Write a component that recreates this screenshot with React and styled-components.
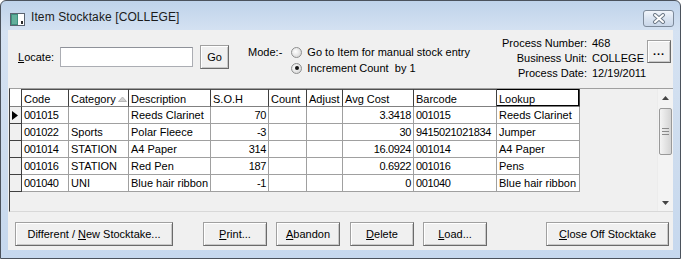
import React from "react";
import styled, { createGlobalStyle } from "styled-components";

const GlobalStyle = createGlobalStyle`
  body {
    margin: 0;
    background: #ffffff;
    font-family: "Liberation Sans", Arial, sans-serif;
    font-size: 11px;
    color: #000;
  }
`;

const columns = [
  { key: "code", title: "Code", width: 47, num: true },
  { key: "category", title: "Category", width: 60, sorted: true },
  { key: "description", title: "Description", width: 82 },
  { key: "soh", title: "S.O.H", width: 58, right: true, num: true },
  { key: "count", title: "Count", width: 38 },
  { key: "adjust", title: "Adjust", width: 36 },
  { key: "cost", title: "Avg Cost", width: 71, right: true, num: true },
  { key: "barcode", title: "Barcode", width: 83, num: true },
  { key: "lookup", title: "Lookup", width: 83, focus: true },
];

const rows = [
  { code: "001015", category: "", description: "Reeds Clarinet", soh: "70", cost: "3.3418", barcode: "001015", lookup: "Reeds Clarinet" },
  { code: "001022", category: "Sports", description: "Polar Fleece", soh: "-3", cost: "30", barcode: "9415021021834", lookup: "Jumper" },
  { code: "001014", category: "STATION", description: "A4 Paper", soh: "314", cost: "16.0924", barcode: "001014", lookup: "A4 Paper" },
  { code: "001016", category: "STATION", description: "Red Pen", soh: "187", cost: "0.6922", barcode: "001016", lookup: "Pens" },
  { code: "001040", category: "UNI", description: "Blue hair ribbon", soh: "-1", cost: "0", barcode: "001040", lookup: "Blue hair ribbon" },
];

const Window = styled.div`
  width: 681px;
  height: 259px;
  box-sizing: border-box;
  border: 1px solid #4b525c;
  border-radius: 6px 6px 0 0;
  background: linear-gradient(#bfd3ea, #d5e2f2 12%, #cddcee 60%, #c6d8ee);
  padding: 0 7px 8px 7px;
  display: flex;
  flex-direction: column;
`;

const TitleBar = styled.div`
  height: 29px;
  display: flex;
  align-items: flex-start;
`;

const TitleIcon = styled.svg`
  margin: 12px 0 0 2px;
  width: 15px;
  height: 13px;
`;

const TitleText = styled.span`
  margin: 9px 0 0 6px;
  font-size: 12px;
  color: #1b1b1b;
  letter-spacing: 0.1px;
`;

const CloseButton = styled.div`
  margin: 9px -1px 0 auto;
  width: 29px;
  height: 15px;
  border: 1px solid #7d8a9a;
  border-radius: 3px;
  background: linear-gradient(#f1f5fb, #dae4f1 50%, #c9d7e9);
  display: flex;
  align-items: center;
  justify-content: center;
`;

const Client = styled.div`
  height: 220px;
  background: #f0f0f0;
  display: flex;
  flex-direction: column;
`;

const TopPanel = styled.div`
  height: 58px;
  display: flex;
  align-items: flex-start;
`;

const LocateGroup = styled.div`
  display: flex;
  align-items: center;
  margin: 15px 0 0 10px;
`;

const Label = styled.label`
  margin-right: 6px;
`;

const TextBox = styled.div`
  width: 133px;
  height: 20px;
  box-sizing: border-box;
  border: 1px solid #abadb3;
  border-top-color: #8e9199;
  background: #fff;
`;

const Button = styled.div`
  box-sizing: border-box;
  width: ${(p) => p.$w}px;
  height: ${(p) => p.$h || 24}px;
  margin-left: ${(p) => (p.$ml === "auto" ? "auto" : `${p.$ml || 0}px`)};
  border: 1px solid #a0a0a0;
  border-right-color: #6a6a6a;
  border-bottom-color: #6a6a6a;
  box-shadow: inset 1px 1px #ffffff, inset -1px -1px #c8c8c8;
  background: #f0f0f0;
  display: flex;
  align-items: center;
  justify-content: center;
  padding-bottom: 1px;
`;

const ModeGroup = styled.div`
  display: flex;
  margin: 14px 0 0 19px;
  line-height: 16px;
`;

const ModeOptions = styled.div`
  display: flex;
  flex-direction: column;
  margin-left: 9px;
`;

const RadioRow = styled.div`
  display: flex;
  align-items: center;
  height: 16px;
`;

const RadioDot = styled.span`
  width: 11px;
  height: 11px;
  box-sizing: border-box;
  border-radius: 50%;
  border: 1px solid #8e8f8f;
  background: radial-gradient(circle at 40% 40%, #ffffff, #dcdcdc 70%);
  margin-right: 5px;
  display: flex;
  align-items: center;
  justify-content: center;
  &::after {
    content: "";
    width: 4px;
    height: 4px;
    border-radius: 50%;
    background: ${(p) => (p.$on ? "#141414" : "transparent")};
  }
`;

const InfoGrid = styled.div`
  margin: 6px 2px 0 auto;
  display: grid;
  grid-template-columns: auto 55px 24px;
  grid-auto-rows: 15px;
  line-height: 15px;
`;

const InfoLabel = styled.span`
  text-align: right;
  padding-right: 5px;
`;

const InfoValue = styled.span`
  grid-column: ${(p) => (p.$wide ? "2 / 4" : "2")};
  white-space: nowrap;
`;

const MoreButton = styled(Button)`
  grid-column: 3;
  grid-row: 1 / 3;
  margin-top: 4px;
  font-weight: bold;
  letter-spacing: 1px;
`;

const DataGrid = styled.div`
  margin-left: 1px;
  height: 124px;
  box-sizing: border-box;
  border-left: 1px solid #404040;
  border-top: 1px solid #a0a0a0;
  border-bottom: 1px solid #d8d8d8;
  display: flex;
  background: #f0f0f0;
`;

const RowsArea = styled.div`
  flex: 1;
`;

const Row = styled.div`
  display: flex;
  height: ${(p) => (p.$head ? 18 : 17)}px;
`;

const IndicatorCell = styled.div`
  width: 12px;
  box-sizing: border-box;
  border-right: 1px solid #404040;
  border-bottom: 1px solid ${(p) => (p.$head ? "#808080" : "#404040")};
  background: ${(p) => (p.$head ? "#ffffff" : "#f0f0f0")};
  display: flex;
  align-items: center;
  padding-left: 2px;
`;

const HeadCell = styled.div`
  width: ${(p) => p.$w}px;
  box-sizing: border-box;
  border-right: 1px solid #404040;
  border-bottom: 1px solid #808080;
  box-shadow: ${(p) =>
    p.$focus ? "inset 0 1px #000, inset -1px 0 #000, inset 0 -1px #000" : "inset 0 1px #505050"};
  background: #ffffff;
  padding: 2px 0 0 2px;
  display: flex;
  align-items: center;
  white-space: nowrap;
  overflow: hidden;
`;

const Cell = styled.div`
  width: ${(p) => p.$w}px;
  box-sizing: border-box;
  border-right: 1px solid #a0a0a0;
  border-bottom: 1px solid #a0a0a0;
  background: #ffffff;
  padding: 1px 2px 0 2px;
  line-height: 15px;
  letter-spacing: ${(p) => (p.$num ? "-0.35px" : "0")};
  text-align: ${(p) => (p.$right ? "right" : "left")};
  white-space: nowrap;
  overflow: hidden;
`;

const Scrollbar = styled.div`
  width: 15px;
  background: #f3f3f3;
  border-left: 1px solid #ececec;
  display: flex;
  flex-direction: column;
  align-items: center;
`;

const ScrollArrow = styled.div`
  height: 17px;
  width: 100%;
  display: flex;
  align-items: center;
  justify-content: center;
`;

const Thumb = styled.div`
  width: 13px;
  height: 47px;
  box-sizing: border-box;
  margin-top: 2px;
  border: 1px solid #999999;
  border-radius: 2px;
  background: linear-gradient(90deg, #f4f4f4, #e4e4e4 50%, #d4d4d4);
  display: flex;
  align-items: center;
  justify-content: center;
`;

const ScrollSpace = styled.div`
  flex: 1;
`;

const ButtonBar = styled.div`
  display: flex;
  margin: 10px 4px 0 7px;
`;

const SortArrow = () => (
  <svg width="9" height="6" viewBox="0 0 9 6" style={{ marginLeft: 2 }}>
    <path d="M0.5 5.5 L4.5 1 L8.5 5.5 Z" fill="#d2d2d2" stroke="#b4b4b4" strokeWidth="1" />
  </svg>
);

export default function App() {
  return (
    <>
      <GlobalStyle />
      <Window>
        <TitleBar>
          <TitleIcon viewBox="0 0 15 13">
            <rect x="0.5" y="0.5" width="14" height="12" fill="#ffffff" stroke="#5b6470" />
            <rect x="1" y="1" width="7" height="11" fill="#3e8f7e" />
            <rect x="2" y="2" width="5" height="9" fill="#63b09c" />
            <rect x="11" y="8" width="2" height="3" fill="#2b2b2b" />
          </TitleIcon>
          <TitleText>Item Stocktake [COLLEGE]</TitleText>
          <CloseButton>
            <svg width="14" height="11" viewBox="0 0 14 11">
              <path d="M3 2 L11 9 M11 2 L3 9" stroke="#6e7a88" strokeWidth="4" strokeLinecap="round" />
              <path d="M3 2 L11 9 M11 2 L3 9" stroke="#ffffff" strokeWidth="2" strokeLinecap="round" />
            </svg>
          </CloseButton>
        </TitleBar>

        <Client>
          <TopPanel>
            <LocateGroup>
              <Label>
                <u>L</u>ocate:
              </Label>
              <TextBox />
              <Button $w={29} $ml={7}>Go</Button>
            </LocateGroup>

            <ModeGroup>
              <span>Mode:-</span>
              <ModeOptions>
                <RadioRow>
                  <RadioDot />
                  Go to Item for manual stock entry
                </RadioRow>
                <RadioRow>
                  <RadioDot $on />
                  Increment Count&nbsp; by 1
                </RadioRow>
              </ModeOptions>
            </ModeGroup>

            <InfoGrid>
              <InfoLabel>Process Number:</InfoLabel>
              <InfoValue>468</InfoValue>
              <MoreButton $w={24} $h={23}>...</MoreButton>
              <InfoLabel>Business Unit:</InfoLabel>
              <InfoValue>COLLEGE</InfoValue>
              <InfoLabel>Process Date:</InfoLabel>
              <InfoValue $wide>12/19/2011</InfoValue>
            </InfoGrid>
          </TopPanel>

          <DataGrid>
            <RowsArea>
              <Row $head>
                <IndicatorCell $head />
                {columns.map((c) => (
                  <HeadCell key={c.key} $w={c.width} $focus={c.focus}>
                    {c.title}
                    {c.sorted && <SortArrow />}
                  </HeadCell>
                ))}
              </Row>
              {rows.map((r, i) => (
                <Row key={r.code}>
                  <IndicatorCell>
                    {i === 0 && (
                      <svg width="6" height="9" viewBox="0 0 6 9">
                        <path d="M0 0 L6 4.5 L0 9 Z" fill="#000" />
                      </svg>
                    )}
                  </IndicatorCell>
                  {columns.map((c) => (
                    <Cell key={c.key} $w={c.width} $right={c.right} $num={c.num}>
                      {r[c.key] || ""}
                    </Cell>
                  ))}
                </Row>
              ))}
            </RowsArea>
            <Scrollbar>
              <ScrollArrow>
                <svg width="7" height="4" viewBox="0 0 7 4">
                  <path d="M0 4 L3.5 0 L7 4 Z" fill="#444" />
                </svg>
              </ScrollArrow>
              <Thumb>
                <svg width="7" height="7" viewBox="0 0 7 7">
                  <path d="M0 0.5 H7 M0 3.5 H7 M0 6.5 H7" stroke="#8a8a8a" strokeWidth="1" />
                </svg>
              </Thumb>
              <ScrollSpace />
              <ScrollArrow>
                <svg width="7" height="4" viewBox="0 0 7 4">
                  <path d="M0 0 L7 0 L3.5 4 Z" fill="#444" />
                </svg>
              </ScrollArrow>
            </Scrollbar>
          </DataGrid>

          <ButtonBar>
            <Button $w={158}>
              <span>
                Different / <u>N</u>ew Stocktake...
              </span>
            </Button>
            <Button $w={64} $ml={30}>
              <span>
                <u>P</u>rint...
              </span>
            </Button>
            <Button $w={64} $ml={9}>
              <span>
                <u>A</u>bandon
              </span>
            </Button>
            <Button $w={64} $ml={10}>
              <span>
                <u>D</u>elete
              </span>
            </Button>
            <Button $w={64} $ml={9}>
              <span>
                <u>L</u>oad...
              </span>
            </Button>
            <Button $w={123} $ml="auto">
              <span>
                <u>C</u>lose Off Stocktake
              </span>
            </Button>
          </ButtonBar>
        </Client>
      </Window>
    </>
  );
}
